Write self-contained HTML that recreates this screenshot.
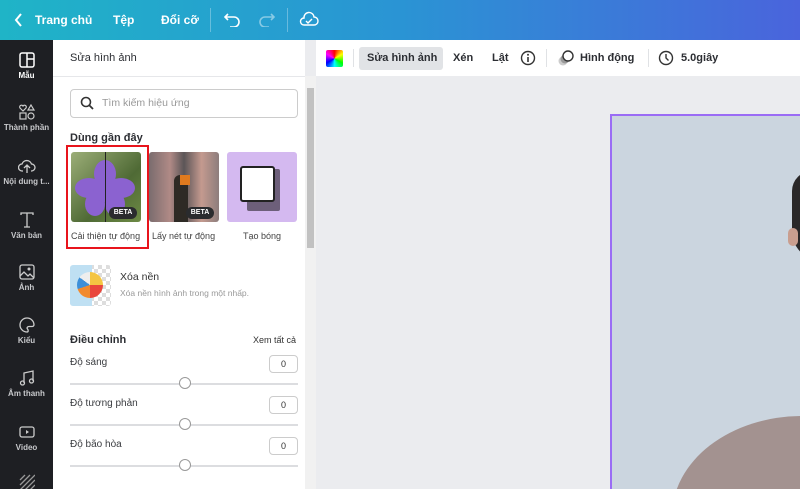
<!DOCTYPE html>
<html><head><meta charset="utf-8"><style>
*{box-sizing:border-box;margin:0;padding:0}
html,body{width:800px;height:489px;overflow:hidden}
body{font-family:"Liberation Sans",sans-serif;background:#ebecef;position:relative}
.abs{position:absolute}
#top{left:0;top:0;width:800px;height:40px;background:linear-gradient(90deg,#1fb4c7 0%,#2a94d4 50%,#4a64dc 100%);color:#fff;font-weight:bold;font-size:12px}
#top span{position:absolute;top:13px}
#side{left:0;top:40px;width:53px;height:449px;background:#1e1f23;color:#c8c9cc;font-size:8px;font-weight:bold;text-align:center;overflow:hidden}
.si{position:absolute;left:0;width:53px}
.si svg{display:block;margin:0 auto 3px}
#panel{left:53px;top:40px;width:252px;height:449px;background:#fff;overflow:hidden}
#scroll{left:305px;top:76px;width:11px;height:413px;background:#f1f1f1}
#tb{left:316px;top:40px;width:484px;height:36px;background:#fff;font-size:11px;font-weight:bold;color:#2c2e33}
.t{position:absolute;top:12px}
.sep{position:absolute;top:9px;width:1px;height:18px;background:#e0e2e5}
.lab{font-size:10px;color:#3a3c40;position:absolute}
.num{position:absolute;left:269px;width:29px;height:18px;border:1px solid #ccc;border-radius:4px;font-size:9px;text-align:center;line-height:16px;color:#333}
.sl{position:absolute;left:70px;width:228px;height:2px;background:#dcdde0}
.kn{position:absolute;left:179px;width:12px;height:12px;border:1px solid #999;border-radius:50%;background:#fff}
.beta{position:absolute;width:28px;height:12px;border-radius:6px;background:#2a2b2e;color:#fff;font-size:7px;font-weight:bold;text-align:center;line-height:12px}
</style></head><body>
<div id="top" class="abs">
<svg class="abs" style="left:14px;top:12px" width="10" height="16"><path d="M7 2L2 8l5 6" stroke="#fff" stroke-width="2" fill="none"/></svg>
<span style="left:35px">Trang chủ</span><span style="left:113px">Tệp</span><span style="left:161px">Đổi cỡ</span>
<div class="abs" style="left:210px;top:8px;width:1px;height:24px;background:rgba(255,255,255,.3)"></div>
<svg class="abs" style="left:224px;top:11px" width="18" height="16"><path d="M4 3L1 6l3 3M1 6h9a5 5 0 010 10H6" stroke="#fff" stroke-width="1.6" fill="none"/></svg>
<svg class="abs" style="left:258px;top:11px" width="18" height="16"><path d="M13 3l3 3-3 3M16 6H7a5 5 0 000 10h4" stroke="rgba(255,255,255,.45)" stroke-width="1.6" fill="none"/></svg>
<div class="abs" style="left:287px;top:8px;width:1px;height:24px;background:rgba(255,255,255,.3)"></div>
<svg class="abs" style="left:299px;top:11px" width="20" height="16"><path d="M5 14h10a4 4 0 000-8 5 5 0 00-10 1 3.5 3.5 0 000 7z M7 10l2 2 4-4" stroke="#fff" stroke-width="1.4" fill="none"/></svg>
</div>
<div id="side" class="abs">
<div class="si" style="top:12px;color:#fff"><svg width="16" height="16"><rect x="1" y="1" width="14" height="14" rx="2" stroke="#fff" stroke-width="1.5" fill="none"/><path d="M8 1v14M8 7h7" stroke="#fff" stroke-width="1.5"/></svg>Mẫu</div>
<div class="si" style="top:64px"><svg width="16" height="16"><path d="M4 7L1 4a1.6 1.6 0 013-2 1.6 1.6 0 013 2z M12 1l3 5H9z" stroke="#ccc" fill="none" stroke-width="1.2"/><rect x="1" y="9" width="6" height="6" stroke="#ccc" fill="none" stroke-width="1.2"/><circle cx="12" cy="12" r="3" stroke="#ccc" fill="none" stroke-width="1.2"/></svg>Thành phần</div>
<div class="si" style="top:118px"><svg width="18" height="16"><path d="M5 13H4a3.5 3.5 0 010-7 5 5 0 019.5 0 3.5 3.5 0 010 7H13M9 15V8M6 10l3-3 3 3" stroke="#ccc" fill="none" stroke-width="1.3"/></svg>Nội dung t...</div>
<div class="si" style="top:172px"><svg width="16" height="16"><path d="M2 3V1h12v2M8 1v14M5 15h6" stroke="#ccc" fill="none" stroke-width="1.3"/></svg>Văn bản</div>
<div class="si" style="top:224px"><svg width="16" height="16"><rect x="1" y="1" width="14" height="14" rx="2" stroke="#ccc" fill="none" stroke-width="1.3"/><path d="M1 12l4-4 4 4 2-2 4 4" stroke="#ccc" fill="none" stroke-width="1.3"/><circle cx="10" cy="5" r="1.5" fill="#ccc"/></svg>Ảnh</div>
<div class="si" style="top:277px"><svg width="16" height="16"><path d="M8 1a7 7 0 100 14c1.5 0 1.5-2 .5-3s0-2.5 1.5-2.5H13A2 2 0 0015 8 7 7 0 008 1z" stroke="#ccc" fill="none" stroke-width="1.3"/></svg>Kiểu</div>
<div class="si" style="top:330px"><svg width="16" height="16"><path d="M5 13V3l9-2v10" stroke="#ccc" fill="none" stroke-width="1.3"/><circle cx="3.5" cy="13" r="2" stroke="#ccc" fill="none" stroke-width="1.3"/><circle cx="12.5" cy="11" r="2" stroke="#ccc" fill="none" stroke-width="1.3"/></svg>Âm thanh</div>
<div class="si" style="top:384px"><svg width="16" height="16"><rect x="1" y="3" width="14" height="10" rx="2" stroke="#ccc" fill="none" stroke-width="1.3"/><path d="M7 6v4l3-2z" fill="#ccc"/></svg>Video</div>
<div class="si" style="top:434px"><svg width="16" height="16"><path d="M1 6l5-5M1 11L11 1M1 16L16 1M6 16l10-10M11 16l5-5" stroke="#999" stroke-width="1.3"/></svg></div>
</div>
<div id="panel" class="abs">
<div class="abs" style="left:17px;top:12px;font-size:11px;color:#2c2e33">Sửa hình ảnh</div>
<div class="abs" style="left:0;top:36px;width:252px;height:1px;background:#e6e7ea"></div>
<div class="abs" style="left:17px;top:49px;width:228px;height:29px;border:1px solid #ccc;border-radius:4px"></div>
<svg class="abs" style="left:27px;top:56px" width="14" height="14"><circle cx="6" cy="6" r="4.5" stroke="#333" stroke-width="1.6" fill="none"/><path d="M9.5 9.5L13 13" stroke="#333" stroke-width="1.8"/></svg>
<div class="abs" style="left:49px;top:57px;font-size:10.5px;color:#999">Tìm kiếm hiệu ứng</div>
<div class="abs" style="left:17px;top:92px;font-size:11px;font-weight:bold;color:#2c2e33">Dùng gần đây</div>
<svg class="abs" style="left:18px;top:112px" width="70" height="70"><defs><linearGradient id="g" x1="0" y1="0" x2="1" y2="1"><stop offset="0" stop-color="#9cae78"/><stop offset=".6" stop-color="#4f6a35"/><stop offset="1" stop-color="#6d8a45"/></linearGradient></defs><rect width="70" height="70" rx="3" fill="url(#g)"/><g fill="#8b62d0"><ellipse cx="34" cy="22" rx="11" ry="14"/><ellipse cx="18" cy="36" rx="14" ry="10"/><ellipse cx="50" cy="36" rx="14" ry="10"/><ellipse cx="24" cy="52" rx="10" ry="12"/><ellipse cx="44" cy="52" rx="10" ry="12"/><circle cx="34" cy="38" r="12"/></g><rect x="34" y="0" width="1" height="70" fill="#222"/></svg>
<div class="beta" style="left:56px;top:167px">BETA</div>
<div class="abs" style="left:96px;top:112px;width:70px;height:70px;border-radius:3px;background:linear-gradient(90deg,#7a6c6e,#b08a86 30%,#5b5557 50%,#c49a8f 75%,#8d7d7c)"></div>
<div class="abs" style="left:121px;top:135px;width:14px;height:47px;background:#2e2a25;border-radius:6px 6px 0 0"></div>
<div class="abs" style="left:127px;top:135px;width:10px;height:10px;background:#e07a1e"></div>
<div class="beta" style="left:133px;top:167px">BETA</div>
<div class="abs" style="left:174px;top:112px;width:70px;height:70px;border-radius:3px;background:#d4b9f0"></div>
<div class="abs" style="left:194px;top:129px;width:33px;height:42px;background:#6d5f7a;border-radius:2px"></div>
<div class="abs" style="left:187px;top:126px;width:35px;height:36px;background:#fff;border:2px solid #222;border-radius:3px"></div>
<div class="abs" style="left:13px;top:105px;width:83px;height:104px;border:2px solid #e8141c"></div>
<div class="abs" style="left:18px;top:191px;font-size:9px;color:#444">Cải thiện tự động</div>
<div class="abs" style="left:99px;top:191px;font-size:9px;color:#444">Lấy nét tự động</div>
<div class="abs" style="left:190px;top:191px;font-size:9px;color:#444">Tạo bóng</div>
<div class="abs" style="left:17px;top:225px;width:41px;height:41px;border-radius:3px;background:repeating-conic-gradient(#ddd 0 25%,#fff 0 50%) 0 0/8px 8px"></div>
<div class="abs" style="left:17px;top:225px;width:22px;height:41px;border-radius:3px 0 0 3px;background:#bfe0f3"></div>
<div class="abs" style="left:24px;top:232px;width:26px;height:26px;border-radius:50%;background:conic-gradient(#f4c542 0 25%,#e9463c 0 50%,#f18a2e 0 70%,#3c8fd9 0 85%,#eee 0)"></div>
<div class="abs" style="left:67px;top:231px;font-size:10.5px;color:#333">Xóa nền</div>
<div class="abs" style="left:67px;top:248px;font-size:8.5px;color:#999">Xóa nền hình ảnh trong một nhấp.</div>
<div class="abs" style="left:17px;top:294px;font-size:11px;font-weight:bold;color:#2c2e33">Điều chỉnh</div>
<div class="abs" style="left:200px;top:295px;font-size:9px;color:#333">Xem tất cả</div>
</div>
<div class="lab" style="left:70px;top:357px">Độ sáng</div><div class="num" style="top:355px">0</div>
<div class="sl" style="top:383px"></div><div class="kn" style="top:377px"></div>
<div class="lab" style="left:70px;top:398px">Độ tương phản</div><div class="num" style="top:396px">0</div>
<div class="sl" style="top:424px"></div><div class="kn" style="top:418px"></div>
<div class="lab" style="left:70px;top:439px">Độ bão hòa</div><div class="num" style="top:437px">0</div>
<div class="sl" style="top:465px"></div><div class="kn" style="top:459px"></div>
<div id="scroll" class="abs"><div class="abs" style="left:2px;top:12px;width:7px;height:160px;background:#c1c1c1"></div></div>
<div id="tb" class="abs">
<div class="abs" style="left:10px;top:10px;width:17px;height:17px;border-radius:2px;background:conic-gradient(red,yellow,lime,cyan,blue,magenta,red)"></div>
<div class="sep" style="left:37px"></div>
<div class="abs" style="left:43px;top:7px;width:84px;height:23px;border-radius:3px;background:#e1e3e6"></div>
<div class="t" style="left:51px">Sửa hình ảnh</div>
<div class="t" style="left:137px">Xén</div><div class="t" style="left:176px">Lật</div>
<svg class="abs" style="left:204px;top:10px" width="16" height="16"><circle cx="8" cy="8" r="6.5" stroke="#333" stroke-width="1.4" fill="none"/><path d="M8 7v5" stroke="#333" stroke-width="1.6"/><circle cx="8" cy="4.8" r="1" fill="#333"/></svg>
<div class="sep" style="left:230px"></div>
<svg class="abs" style="left:241px;top:9px" width="18" height="18"><circle cx="6" cy="12" r="4.5" fill="#ccc"/><circle cx="8" cy="10" r="4.5" fill="#999"/><circle cx="11" cy="7" r="5" fill="#fff" stroke="#333" stroke-width="1.4"/></svg>
<div class="t" style="left:264px">Hình động</div>
<div class="sep" style="left:332px"></div>
<svg class="abs" style="left:342px;top:10px" width="16" height="16"><circle cx="8" cy="8" r="6.5" stroke="#333" stroke-width="1.4" fill="none"/><path d="M8 4v4l2.5 2.5" stroke="#333" stroke-width="1.4" fill="none"/></svg>
<div class="t" style="left:365px">5.0giây</div>
</div>
<div class="abs" style="left:610px;top:114px;width:190px;height:375px;border:2px solid #9a6cf5;border-right:none;border-bottom:none;background:#cbd5df;overflow:hidden">
<div class="abs" style="left:180px;top:55px;width:40px;height:90px;border-radius:20px 0 0 30px;background:#2a2829"></div>
<div class="abs" style="left:176px;top:112px;width:10px;height:18px;border-radius:5px;background:#c99e8f"></div>
<div class="abs" style="left:60px;top:300px;width:260px;height:200px;border-radius:50% 0 0 0;background:#a39290"></div>
</div>
</body></html>
